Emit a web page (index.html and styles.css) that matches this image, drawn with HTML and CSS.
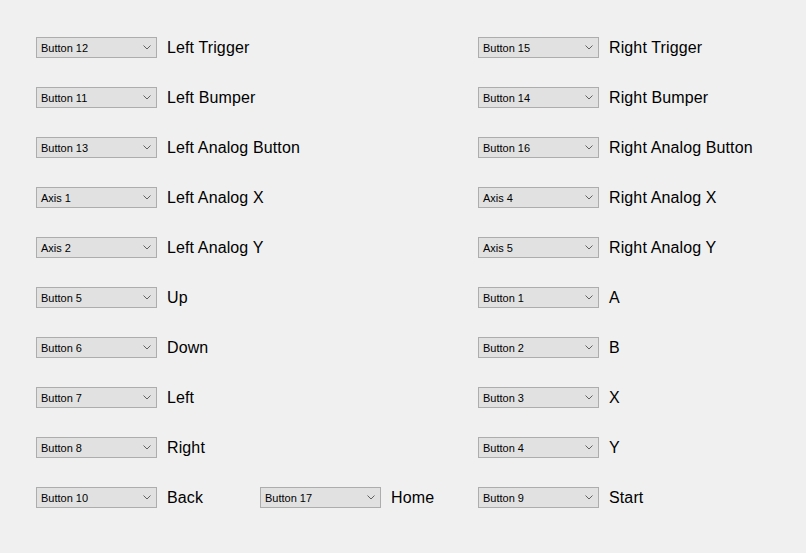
FILE: index.html
```html
<!DOCTYPE html>
<html>
<head>
<meta charset="utf-8">
<link rel="stylesheet" href="styles.css">
</head>
<body>
<div class="panel">
  <div class="col">
    <div class="row"><div class="pair"><div class="combo"><span>Button 12</span><svg class="chev" width="8" height="5" viewBox="0 0 8 5"><polyline points="0.5,0.5 4,4 7.5,0.5"/></svg></div><span class="label">Left Trigger</span></div></div>
    <div class="row"><div class="pair"><div class="combo"><span>Button 11</span><svg class="chev" width="8" height="5" viewBox="0 0 8 5"><polyline points="0.5,0.5 4,4 7.5,0.5"/></svg></div><span class="label">Left Bumper</span></div></div>
    <div class="row"><div class="pair"><div class="combo"><span>Button 13</span><svg class="chev" width="8" height="5" viewBox="0 0 8 5"><polyline points="0.5,0.5 4,4 7.5,0.5"/></svg></div><span class="label">Left Analog Button</span></div></div>
    <div class="row"><div class="pair"><div class="combo"><span>Axis 1</span><svg class="chev" width="8" height="5" viewBox="0 0 8 5"><polyline points="0.5,0.5 4,4 7.5,0.5"/></svg></div><span class="label">Left Analog X</span></div></div>
    <div class="row"><div class="pair"><div class="combo"><span>Axis 2</span><svg class="chev" width="8" height="5" viewBox="0 0 8 5"><polyline points="0.5,0.5 4,4 7.5,0.5"/></svg></div><span class="label">Left Analog Y</span></div></div>
    <div class="row"><div class="pair"><div class="combo"><span>Button 5</span><svg class="chev" width="8" height="5" viewBox="0 0 8 5"><polyline points="0.5,0.5 4,4 7.5,0.5"/></svg></div><span class="label">Up</span></div></div>
    <div class="row"><div class="pair"><div class="combo"><span>Button 6</span><svg class="chev" width="8" height="5" viewBox="0 0 8 5"><polyline points="0.5,0.5 4,4 7.5,0.5"/></svg></div><span class="label">Down</span></div></div>
    <div class="row"><div class="pair"><div class="combo"><span>Button 7</span><svg class="chev" width="8" height="5" viewBox="0 0 8 5"><polyline points="0.5,0.5 4,4 7.5,0.5"/></svg></div><span class="label">Left</span></div></div>
    <div class="row"><div class="pair"><div class="combo"><span>Button 8</span><svg class="chev" width="8" height="5" viewBox="0 0 8 5"><polyline points="0.5,0.5 4,4 7.5,0.5"/></svg></div><span class="label">Right</span></div></div>
    <div class="row">
      <div class="pair fixed"><div class="combo"><span>Button 10</span><svg class="chev" width="8" height="5" viewBox="0 0 8 5"><polyline points="0.5,0.5 4,4 7.5,0.5"/></svg></div><span class="label">Back</span></div>
      <div class="pair"><div class="combo"><span>Button 17</span><svg class="chev" width="8" height="5" viewBox="0 0 8 5"><polyline points="0.5,0.5 4,4 7.5,0.5"/></svg></div><span class="label">Home</span></div>
    </div>
  </div>
  <div class="col">
    <div class="row"><div class="pair"><div class="combo"><span>Button 15</span><svg class="chev" width="8" height="5" viewBox="0 0 8 5"><polyline points="0.5,0.5 4,4 7.5,0.5"/></svg></div><span class="label">Right Trigger</span></div></div>
    <div class="row"><div class="pair"><div class="combo"><span>Button 14</span><svg class="chev" width="8" height="5" viewBox="0 0 8 5"><polyline points="0.5,0.5 4,4 7.5,0.5"/></svg></div><span class="label">Right Bumper</span></div></div>
    <div class="row"><div class="pair"><div class="combo"><span>Button 16</span><svg class="chev" width="8" height="5" viewBox="0 0 8 5"><polyline points="0.5,0.5 4,4 7.5,0.5"/></svg></div><span class="label">Right Analog Button</span></div></div>
    <div class="row"><div class="pair"><div class="combo"><span>Axis 4</span><svg class="chev" width="8" height="5" viewBox="0 0 8 5"><polyline points="0.5,0.5 4,4 7.5,0.5"/></svg></div><span class="label">Right Analog X</span></div></div>
    <div class="row"><div class="pair"><div class="combo"><span>Axis 5</span><svg class="chev" width="8" height="5" viewBox="0 0 8 5"><polyline points="0.5,0.5 4,4 7.5,0.5"/></svg></div><span class="label">Right Analog Y</span></div></div>
    <div class="row"><div class="pair"><div class="combo"><span>Button 1</span><svg class="chev" width="8" height="5" viewBox="0 0 8 5"><polyline points="0.5,0.5 4,4 7.5,0.5"/></svg></div><span class="label">A</span></div></div>
    <div class="row"><div class="pair"><div class="combo"><span>Button 2</span><svg class="chev" width="8" height="5" viewBox="0 0 8 5"><polyline points="0.5,0.5 4,4 7.5,0.5"/></svg></div><span class="label">B</span></div></div>
    <div class="row"><div class="pair"><div class="combo"><span>Button 3</span><svg class="chev" width="8" height="5" viewBox="0 0 8 5"><polyline points="0.5,0.5 4,4 7.5,0.5"/></svg></div><span class="label">X</span></div></div>
    <div class="row"><div class="pair"><div class="combo"><span>Button 4</span><svg class="chev" width="8" height="5" viewBox="0 0 8 5"><polyline points="0.5,0.5 4,4 7.5,0.5"/></svg></div><span class="label">Y</span></div></div>
    <div class="row"><div class="pair"><div class="combo"><span>Button 9</span><svg class="chev" width="8" height="5" viewBox="0 0 8 5"><polyline points="0.5,0.5 4,4 7.5,0.5"/></svg></div><span class="label">Start</span></div></div>
  </div>
</div>
</body>
</html>
```

FILE: styles.css
```css
html, body {
  margin: 0;
  padding: 0;
  background: #f0f0f0;
  width: 806px;
  height: 553px;
  overflow: hidden;
}
.panel {
  display: grid;
  grid-template-columns: 442px 1fr;
  padding: 37px 0 0 36px;
  font-family: "Liberation Sans", Arial, sans-serif;
  color: #000;
}
.col {
  display: flex;
  flex-direction: column;
  gap: 29px;
}
.row {
  display: flex;
  align-items: center;
  height: 21px;
}
.pair {
  display: flex;
  align-items: center;
  gap: 10px;
}
.pair.fixed {
  width: 224px;
}
.combo {
  box-sizing: border-box;
  width: 121px;
  height: 21px;
  border: 1px solid #adadad;
  background: #e1e1e1;
  display: flex;
  align-items: center;
  padding: 0 5px 0 4px;
  font-size: 11px;
  flex: none;
}
.chev {
  margin-left: auto;
  fill: none;
  stroke: #606060;
  stroke-width: 1;
}
.label {
  font-size: 16px;
  line-height: 21px;
  letter-spacing: 0.12px;
  white-space: nowrap;
}
```
